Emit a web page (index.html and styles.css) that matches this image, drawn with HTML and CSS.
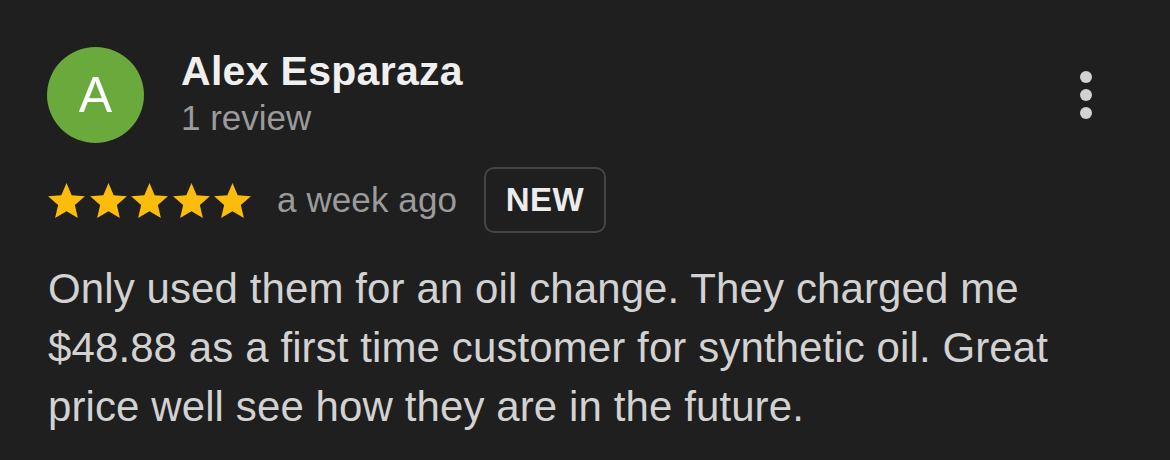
FILE: index.html
```html
<!DOCTYPE html>
<html lang="en">
<head>
<meta charset="utf-8">
<title>Review</title>
<link rel="stylesheet" href="styles.css">
</head>
<body>
<div class="review">
  <div class="header">
    <div class="avatar">A</div>
    <div class="who">
      <div class="name">Alex Esparaza</div>
      <div class="count">1 review</div>
    </div>
    <div class="more" aria-label="More options">
      <span class="dot"></span><span class="dot"></span><span class="dot"></span>
    </div>
  </div>
  <div class="meta">
    <div class="stars">
      <svg class="star" viewBox="2 2 20 19"><path d="M12 17.27L18.18 21l-1.64-7.03L22 9.24l-7.19-.61L12 2 9.19 8.63 2 9.24l5.46 4.73L5.82 21z"/></svg>
      <svg class="star" viewBox="2 2 20 19"><path d="M12 17.27L18.18 21l-1.64-7.03L22 9.24l-7.19-.61L12 2 9.19 8.63 2 9.24l5.46 4.73L5.82 21z"/></svg>
      <svg class="star" viewBox="2 2 20 19"><path d="M12 17.27L18.18 21l-1.64-7.03L22 9.24l-7.19-.61L12 2 9.19 8.63 2 9.24l5.46 4.73L5.82 21z"/></svg>
      <svg class="star" viewBox="2 2 20 19"><path d="M12 17.27L18.18 21l-1.64-7.03L22 9.24l-7.19-.61L12 2 9.19 8.63 2 9.24l5.46 4.73L5.82 21z"/></svg>
      <svg class="star" viewBox="2 2 20 19"><path d="M12 17.27L18.18 21l-1.64-7.03L22 9.24l-7.19-.61L12 2 9.19 8.63 2 9.24l5.46 4.73L5.82 21z"/></svg>
    </div>
    <span class="when">a week ago</span>
    <span class="badge">NEW</span>
  </div>
  <p class="text">Only used them for an oil change. They charged me $48.88 as a first time customer for synthetic oil. Great price well see how they are in the future.</p>
</div>
</body>
</html>
```
FILE: styles.css
```css
html, body {
  margin: 0;
  padding: 0;
  background: #1f1f1f;
}
body {
  font-family: "Liberation Sans", Arial, Helvetica, sans-serif;
  width: 1170px;
  height: 460px;
  overflow: hidden;
}
.review {
  padding: 47px 78px 0 47px;
}
.header {
  display: flex;
  align-items: flex-start;
}
.avatar {
  width: 97px;
  height: 96px;
  border-radius: 50%;
  background: #6aaa3c;
  color: #ffffff;
  font-size: 50px;
  line-height: 96px;
  text-align: center;
  flex-shrink: 0;
}
.who {
  margin-left: 37px;
  flex: 1;
}
.name {
  font-size: 41px;
  font-weight: 700;
  line-height: 48px;
  color: #efefef;
  letter-spacing: 0.3px;
}
.count {
  margin-top: 3px;
  font-size: 35px;
  line-height: 40px;
  color: #9b9b9b;
}
.more {
  display: flex;
  flex-direction: column;
  gap: 6px;
  margin-top: 24px;
}
.dot {
  width: 12px;
  height: 12px;
  border-radius: 50%;
  background: #d2d2d2;
}
.meta {
  display: flex;
  align-items: center;
  margin-top: 24px;
  padding-left: 1px;
}
.stars {
  display: flex;
  gap: 4.5px;
}
.star {
  width: 37px;
  height: 35px;
  fill: #fbbc0c;
  display: block;
}
.when {
  margin-left: 26px;
  font-size: 35px;
  line-height: 40px;
  color: #9b9b9b;
  letter-spacing: 0.1px;
}
.badge {
  margin-left: 27px;
  box-sizing: border-box;
  height: 66px;
  width: 122px;
  border: 2px solid #454545;
  border-radius: 10px;
  display: flex;
  align-items: center;
  justify-content: center;
  font-size: 33px;
  font-weight: 700;
  color: #ececec;
  letter-spacing: 0.5px;
}
.text {
  margin: 26px 0 0 1px;
  font-size: 42px;
  line-height: 59px;
  color: #d2d2d2;
  letter-spacing: 0.1px;
}
```
